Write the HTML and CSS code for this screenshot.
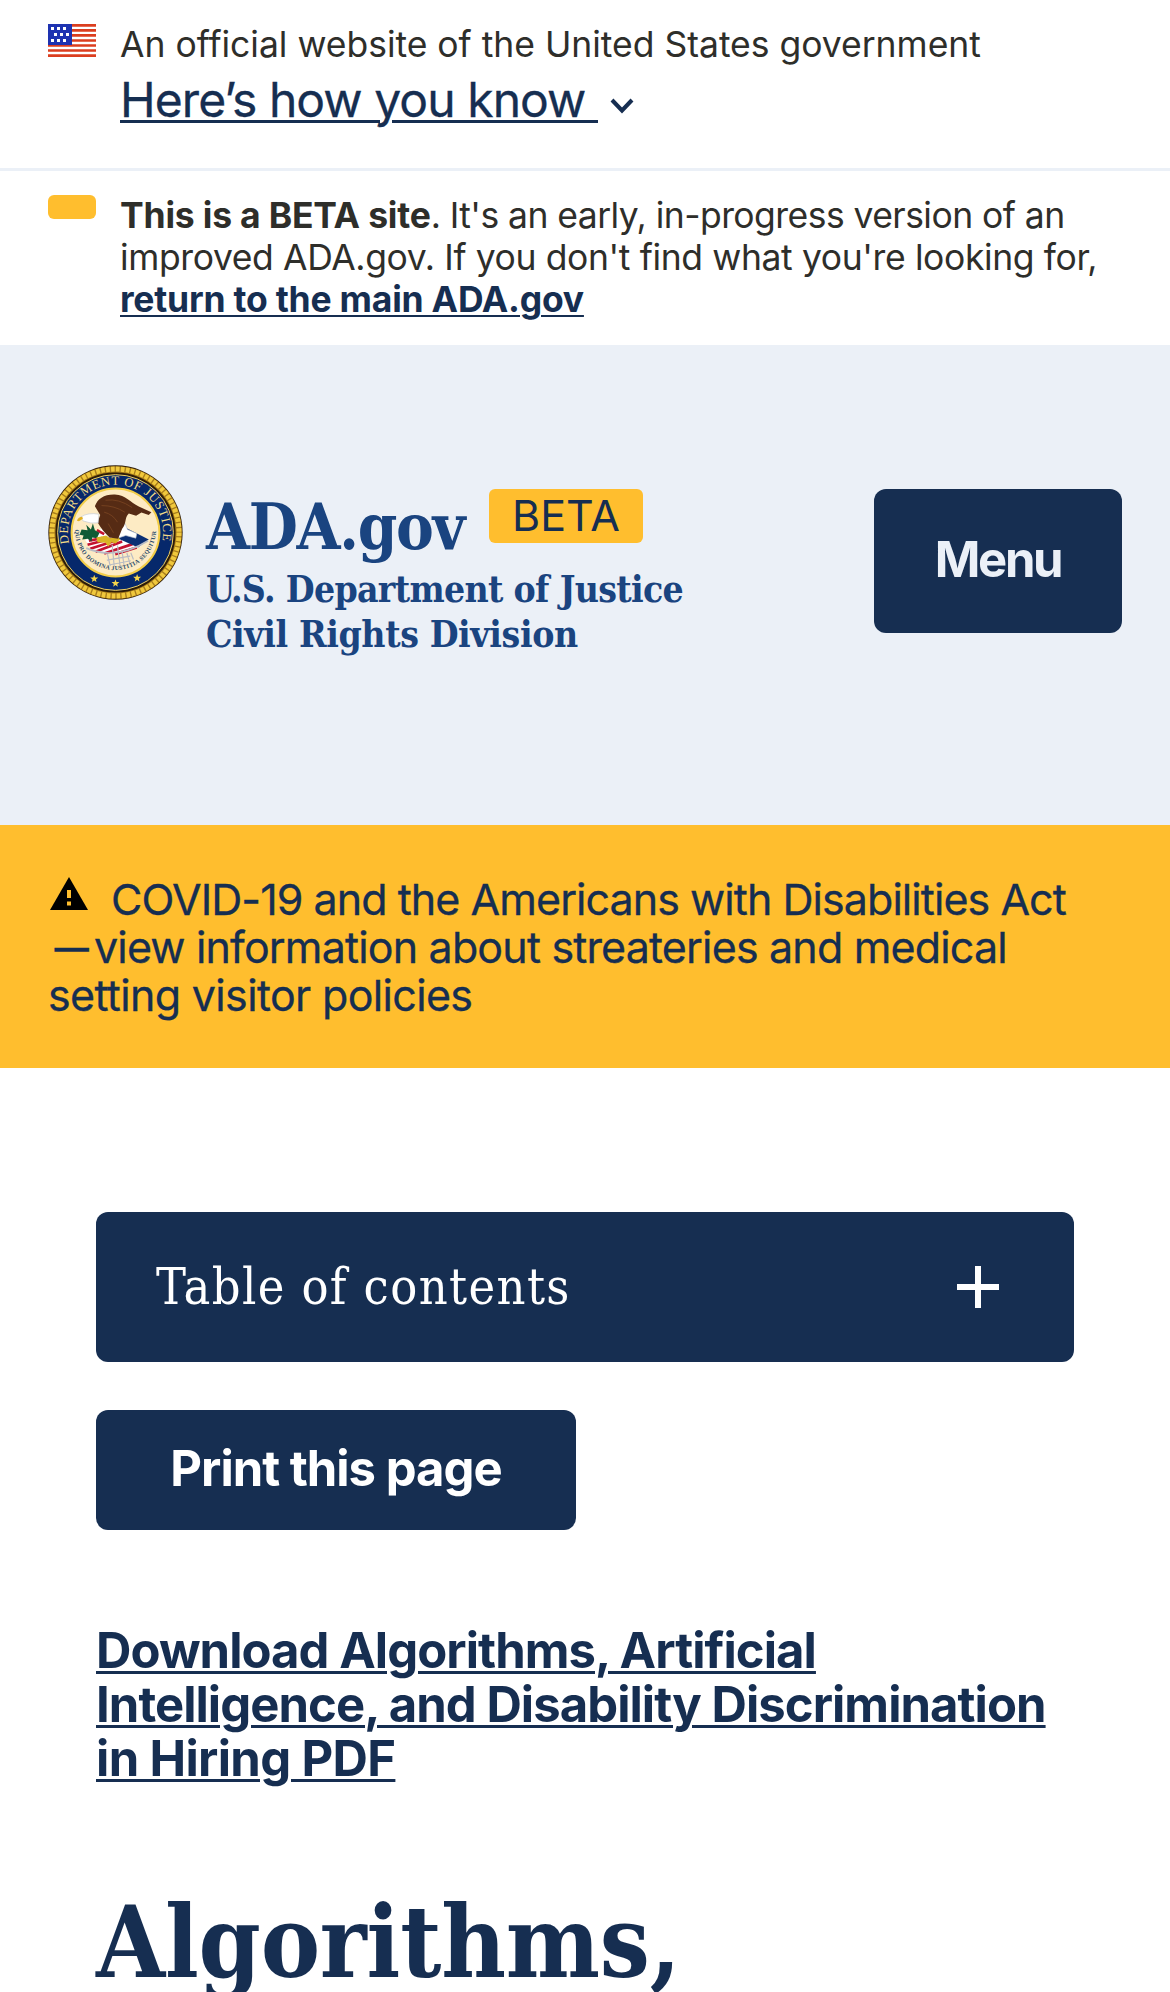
FILE: index.html
```html
<!DOCTYPE html>
<html lang="en">
<head>
<meta charset="utf-8">
<title>Algorithms, Artificial Intelligence, and Disability Discrimination in Hiring</title>
<link rel="stylesheet" href="styles.css">
</head>
<body>
<section class="gov">
  <svg class="flag" viewBox="0 0 48 33" aria-hidden="true">
    <path fill="#fff" d="M0 0h48v33H0z"/>
    <path stroke="#db3e1f" stroke-width="2.7" d="M0 1.3h48M0 6.4h48M0 11.4h48M0 16.5h48M0 21.5h48M0 26.5h48M0 31.6h48"/>
    <path fill="#1e33b1" d="M0 0h24v21H0z"/>
    <path stroke="#fff" stroke-width="3" stroke-dasharray="3 3" d="M3 4.500h15M6 10.500h15M3 16.500h15"/>
  </svg>
  <div>
    <p class="gov-line">An official website of the United States government</p>
    <p class="know"><a href="#">Here’s how you know&nbsp;</a><svg class="chevron" viewBox="0 0 24 16" aria-hidden="true"><path d="M2 2l10 10.500L22 2" fill="none" stroke="#162e51" stroke-width="4"/></svg></p>
  </div>
</section>
<section class="beta">
  <span class="beta-chip"></span>
  <p class="beta-text"><span class="early"><b>This is a BETA site</b>. It's an early, in-progress version of an</span><br>improved ADA.gov. If you don't find what you're looking for,<br><a href="#">return to the main ADA.gov</a></p>
</section>
<header class="header">
  <svg class="seal" viewBox="53 44 406 406" aria-label="Department of Justice seal">
    <defs>
      <path id="top" d="M117 280A143 143 0 1 1 395 280"/>
      <path id="low" d="M134 238A122 122 0 0 0 378 238"/>
      <path id="star" d="M0-12L3-4 12-4 5 2 7 10 0 5-7 10-5 2-12-4-3-4z"/>
    </defs>
    <circle cx="256" cy="247" r="202" fill="#2d1c08"/>
    <circle cx="256" cy="247" r="190" fill="none" stroke="#a87d1c" stroke-width="19"/>
    <circle cx="256" cy="247" r="191" fill="none" stroke="#f0c83c" stroke-width="15" stroke-dasharray="11 4"/>
    <circle cx="256" cy="247" r="174" fill="#06286b" stroke="#f0d060" stroke-width="3"/>
    <circle cx="256" cy="247" r="132" fill="#fdebc4" stroke="#f2cd48" stroke-width="6"/>
    <text class="seal-top"><textPath href="#top" textLength="508">DEPARTMENT OF JUSTICE</textPath></text>
    <path fill="#fff" d="M165 270l50-36 30 26 110 10-30 23-60 19-75-8z"/>
    <path stroke="#c41230" stroke-width="8" d="M200 240l22 12M176 272l40-8M172 284l70-18M180 296l80-26M196 305l80-31M222 310l85-28M255 312l65-20"/>
    <path fill="#0b2f74" d="M262 264l28-30 66 34-32 24z"/>
    <path fill="#fff" stroke="#b9c2d0" stroke-width="2" d="M262 238l22-20 8 20 28 12-3 14-30-8-24 8z"/>
    <path fill="none" stroke="#b9bcc4" stroke-width="5" d="M168 294q90 38 186-22"/>
    <path fill="none" stroke="#b9bcc4" stroke-width="3.500" d="M232 312l8 36M246 284l6 64M262 286l8 64M276 306l6 42M290 308l10 34M302 308l8 20M230 330l70-12M240 344l62-12"/>
    <path fill="#0f5a35" d="M154 238l18 2-4-16 14 14 6-18 6 20 14 8-8 16-14-2-2 12-12-8-16 2 4-12-12-2z"/>
    <path fill="#d9b324" d="M198 262l30-6 12 8 22-6 8 10-14 12-12-4-10 14-8-12-24-2z"/>
    <path fill="#562b14" d="M194 168c8-22 28-36 60-35 34 2 46 24 72 36l38 17-8 8-22-7-16 10-22-7c-14 14-6 30-20 46l-12 30-26-4c-14-14-26-28-36-46l8-22z"/>
    <path fill="none" stroke="#74401f" stroke-width="3" d="M214 166q40 0 70 20M222 186q26 6 40 30M226 150q40-6 80 22M234 220l16 28"/>
    <path fill="#fff" stroke="#c3c8d0" stroke-width="2" d="M152 200q22-14 54-8l-2 26q-22 4-46-6z"/>
    <path fill="#e3b020" d="M140 212q4-12 16-12l2 6-12 7z"/>
    <text class="seal-low"><textPath href="#low" textLength="378">QUI PRO DOMINA JUSTITIA SEQUITUR</textPath></text>
    <g fill="#f7d64a"><use href="#star" x="192" y="386"/><use href="#star" x="256" y="400"/><use href="#star" x="321" y="384"/></g>
  </svg>
  <div class="brand">
    <div class="brand-row"><span class="brand-name">ADA.gov</span><span class="badge">BETA</span></div>
    <p class="dept"><span class="dept-name">U.S. Department of Justice</span><br>Civil Rights Division</p>
  </div>
  <button class="menu">Menu</button>
</header>
<section class="alert">
  <div class="alert-row"><svg class="warn" viewBox="0 0 38 33" aria-hidden="true"><path d="M19 0l19 33H0z"/><path stroke="#ffbe2e" stroke-width="4" d="M19 13v8M19 24.500v4"/></svg><span class="covid">COVID-19 and the Americans with Disabilities Act</span></div>
  <div class="alert-row"><span class="dash">—</span><span>view information about streateries and medical</span></div>
  <div class="alert-row policies">setting visitor policies</div>
</section>
<main class="main">
  <div class="toc"><span>Table of contents</span><svg class="plus" viewBox="0 0 42 42" aria-hidden="true"><path stroke="#fff" stroke-width="6" d="M0 21h42M21 0v42"/></svg></div>
  <button class="print">Print this page</button>
  <p class="download"><a href="#">Download Algorithms, Artificial<br>Intelligence, and Disability Discrimination<br><span class="hiring">in Hiring PDF</span></a></p>
  <h1 class="title">Algorithms,</h1>
</main>
</body>
</html>
```
FILE: styles.css
```css
* { box-sizing: border-box; }
body { margin: 0; width: 1170px; height: 1992px; overflow: hidden; background: #fff; color: #2e2e2a; font-family: Inter, "Liberation Sans", sans-serif; }
p, h1 { margin: 0; font-weight: 400; }
a { color: #162e51; text-underline-offset: 3px; text-decoration-thickness: 3px; }
button { border: 0; font-family: inherit; white-space: nowrap; }
svg { display: block; flex: none; }
.gov { display: flex; gap: 24px; height: 171px; padding: 24px 48px 0; border-bottom: 3px solid #ebf0f7; }
.flag { width: 48px; height: 33px; }
.gov-line { font-size: 35.5px; line-height: 42px; letter-spacing: -.02px; }
.know { display: flex; margin-top: 7px; font-size: 48px; line-height: 54px; letter-spacing: -.93px; white-space: nowrap; -webkit-text-stroke: .3px; }
.chevron { width: 24px; height: 16px; margin: 25px 0 0 12px; }
.beta { display: flex; gap: 24px; height: 174px; padding: 24px 48px 0; }
.beta-chip { width: 48px; height: 24px; border-radius: 6px; background: #ffbe2e; }
.beta-text { font-size: 35.5px; line-height: 42px; letter-spacing: -.38px; white-space: nowrap; }
.early { letter-spacing: -.55px; }
.early b { letter-spacing: -.2px; }
.beta-text a { font-weight: 700; letter-spacing: -.22px; text-decoration-thickness: 2px; }
.header { display: flex; align-items: flex-start; height: 480px; padding: 0 48px; background: #ebf0f7; }
.seal { width: 135px; height: 135px; margin-top: 120px; }
.seal-top { font: 38px "Liberation Serif", serif; fill: #f3dc86; }
.seal-low { font: bold 18px "Liberation Serif", serif; fill: #27496b; }
.brand { margin: 144px 0 0 23px; color: #1a4480; font-family: "DejaVu Serif Condensed", "DejaVu Serif", serif; font-weight: 700; white-space: nowrap; }
.brand-row { display: flex; align-items: flex-start; height: 78px; }
.brand-name { width: 283px; padding-top: 6px; font-size: 63px; line-height: 64px; letter-spacing: -1.3px; }
.badge { display: flex; justify-content: center; width: 154px; height: 54px; border-radius: 6px; background: #ffbe2e; color: #162e51; font: 43px/53px Inter, sans-serif; }
.dept { font-size: 37px; font-weight: 700; line-height: 45px; letter-spacing: -.4px; }
.dept-name { letter-spacing: -.68px; }
.menu { width: 248px; height: 144px; margin: 144px 0 0 auto; padding: 0 0 4px; border-radius: 12px; background: #162e51; color: #ebf0f7; font-size: 49px; font-weight: 700; letter-spacing: -2.3px; }
.alert { height: 243px; padding: 50px 48px 0; background: #ffbe2e; color: #162e51; font-size: 43px; line-height: 48px; letter-spacing: -.84px; white-space: nowrap; -webkit-text-stroke: .3px; }
.alert-row { display: flex; height: 48px; }
.covid { letter-spacing: -.95px; }
.policies { letter-spacing: -.66px; }
.warn { width: 38px; height: 33px; margin: 2px 23px 0 2px; }
.dash { width: 46px; transform: translateX(2px) scaleX(.8); }
.main { padding: 144px 96px 0; color: #162e51; }
.toc { display: flex; align-items: center; justify-content: space-between; height: 150px; padding: 0 75px 0 60px; border-radius: 12px; background: #162e51; color: #fff; font: 50px/1 "DejaVu Serif Condensed", "DejaVu Serif", serif; letter-spacing: 1.4px; }
.plus { width: 42px; height: 42px; }
.print { display: block; width: 480px; height: 120px; margin-top: 48px; padding: 0 0 4px; border-radius: 12px; background: #162e51; color: #fff; font-size: 49px; font-weight: 700; letter-spacing: -1px; }
.download { margin-top: 94px; font-size: 49px; font-weight: 700; line-height: 54px; letter-spacing: -.94px; white-space: nowrap; }
.hiring { letter-spacing: -.65px; }
.title { margin-top: 101px; font: 700 99px/110px "DejaVu Serif Condensed", "DejaVu Serif", serif; letter-spacing: -.2px; }
```
